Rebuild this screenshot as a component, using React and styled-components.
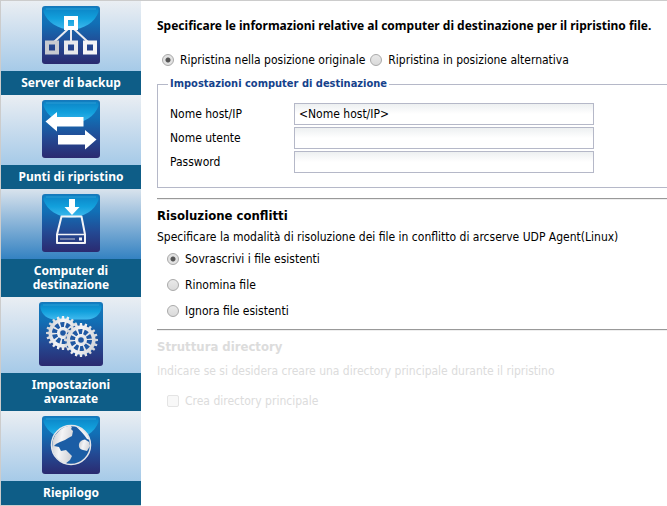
import React, { useState } from 'react';
import styled, { createGlobalStyle } from 'styled-components';

const colors = {
  band: '#0e5d87',
  line: '#b5b8c8',
  legend: '#15428b',
  muted: '#dcdcdc',
};

const gearPath = (cx, cy, outer, inner, teeth)=>{
  const step = (Math.PI * 2) / teeth;
  const at = (r, a)=> `${(cx + r * Math.cos(a)).toFixed(2)} ${(cy + r * Math.sin(a)).toFixed(2)}`;
  let d = '';
  for (let i = 0; i < teeth; i++) {
    const a = i * step;
    d += `${i ? 'L' : 'M'}${at(inner, a - step * 0.3)}L${at(outer, a - step * 0.2)}L${at(outer, a + step * 0.2)}L${at(inner, a + step * 0.3)}`;
  }
  return d + 'Z';
}

const Gear = ({cx, cy})=>(
  <g>
    <path d={gearPath(cx, cy, 17, 14.5, 20)} fill="url(#metal)" />
    <circle cx={cx} cy={cy} r="8.500" fill="none" stroke="#2058a3" strokeWidth="5" strokeDasharray="3.7 1.641" />
    <circle cx={cx} cy={cy} r="3.600" fill="#2058a3" stroke="#e4e6ea" strokeWidth="1.600" />
  </g>
)

const gloss = {
  58: 'M4 1.5H54Q57 2 56.5 6C53 16 42 23.5 29 23.5C16 23.5 5 16 1.5 6Q1 2 4 1.5Z',
  64: 'M4 1.5H60Q63 2 62.5 6C61 13 56 17 48 17.5H16C8 17 3 13 1.5 6Q1 2 4 1.5Z',
};

const Tile = ({size, children})=>(
  <svg width={size} height={size} viewBox={`0 0 ${size} ${size}`} aria-hidden="true">
    <defs>
      <linearGradient id="tile" x1="0" y1="0" x2="0" y2="1">
        <stop offset="0" stopColor="#1779bb" />
        <stop offset="0.3" stopColor="#116fb5" />
        <stop offset="0.65" stopColor="#234a94" />
        <stop offset="1" stopColor="#2b2a70" />
      </linearGradient>
      <linearGradient id="gloss" x1="0" y1="0" x2="0" y2="1">
        <stop offset="0" stopColor="#0b84c6" />
        <stop offset="0.5" stopColor="#12a0dc" />
        <stop offset="1" stopColor="#3fb9ee" />
      </linearGradient>
      <linearGradient id="metal" x1="0" y1="0" x2="1" y2="0.3">
        <stop offset="0" stopColor="#c3c5ca" />
        <stop offset="0.5" stopColor="#f4f4f6" />
        <stop offset="1" stopColor="#d5d6da" />
      </linearGradient>
    </defs>
    <rect width={size} height={size} rx="3" fill="url(#tile)" />
    <path d={gloss[size]} fill="url(#gloss)" />
    <path d={`M4 3H${size - 4}`} stroke="#3ba5da" strokeWidth="1" opacity="0.7" />
    {children}
  </svg>
)

const ServerIcon = ()=>(
  <Tile size={58}>
    <path d="M29 24V35M26 23L12 36M32 23L46 36" stroke="#e9ebf0" strokeWidth="2" fill="none" />
    <path fillRule="evenodd" d="M22 10h14v14H22zM26 14v6h6v-6z" fill="#fff" />
    <path fillRule="evenodd" d="M3 34.500h14v14H3zM7 38.500v6h6v-6z" fill="#c8cad0" />
    <path fillRule="evenodd" d="M22 34.500h14v14H22zM26 38.500v6h6v-6z" fill="#e8e9ec" />
    <path fillRule="evenodd" d="M41 34.500h14v14H41zM45 38.500v6h6v-6z" fill="#f4f4f6" />
  </Tile>
)

const PointsIcon = ()=>(
  <Tile size={58}>
    <path d="M3.500 21.500L15 12V17H41.500V26.500H15V31.500Z" fill="#fff" />
    <path d="M54.500 39.500L43 30V35H16V44.500H43V49.500Z" fill="#fff" />
  </Tile>
)

const ComputerIcon = ()=>(
  <Tile size={58}>
    <path d="M27 5H33V13H37.500L30 21L22.500 13H27Z" fill="#fff" />
    <path d="M19.500 22.500H39.500L43 40.500V49H15V40.500Z" fill="none" stroke="#f2f3f6" strokeWidth="2" strokeLinejoin="round" />
    <path d="M15 40.500H43" stroke="#f2f3f6" strokeWidth="1.500" />
    <path d="M18 45H33" stroke="#c4c8d4" strokeWidth="1" />
    <rect x="37" y="43.500" width="3" height="3" fill="#f2f3f6" />
  </Tile>
)

const SettingsIcon = ()=>(
  <Tile size={64}>
    <Gear cx={24} cy={31} />
    <circle cx="42" cy="38" r="15.500" fill="#2058a3" />
    <Gear cx={42} cy={38} />
  </Tile>
)

const GlobeIcon = ()=>(
  <Tile size={58}>
    <circle cx="29" cy="29" r="19" fill="#1b5da5" />
    <path d="M11 24Q15 12 28 9.500Q31 11 29 13L31 15L30 20Q26 22 23 24L18 26L14 28L12 30L17 31L19 35L24 34L30 40L28 44L23 48Q13 43 10 33Z" fill="url(#metal)" />
    <path d="M34 10.500Q44 13 48 24L45 23Q42 18 34 10.500Z" fill="#f0f1f3" />
    <path d="M37 28Q38 24 43 23.500L47 26L48 30L45 35L41 34Q36 33 37 28Z" fill="url(#metal)" />
    <circle cx="29" cy="29" r="19.500" fill="none" stroke="#e4e6ea" strokeWidth="1.500" />
  </Tile>
)

const steps = [
  { label: 'Server di backup', Icon: ServerIcon },
  { label: 'Punti di ripristino', Icon: PointsIcon },
  { label: 'Computer di destinazione', Icon: ComputerIcon, active: true },
  { label: 'Impostazioni avanzate', Icon: SettingsIcon },
  { label: 'Riepilogo', Icon: GlobeIcon },
];

const conflicts = ['Sovrascrivi i file esistenti', 'Rinomina file', 'Ignora file esistenti'];

const App = ()=>{
  const [position, setPosition] = useState('original');
  const [conflict, setConflict] = useState(0);

  return (
    <Page>
      <GlobalStyle />
      <Sidebar>
        {steps.map(({label, Icon, active})=>(
          <Step key={label} type="button" aria-current={active ? 'step' : undefined}>
            <StepIcon $active={active}><Icon /></StepIcon>
            <StepLabel>{label}</StepLabel>
          </Step>
        ))}
      </Sidebar>
      <Main>
        <Intro>Specificare le informazioni relative al computer di destinazione per il ripristino file.</Intro>
        <Positions>
          <Choice>
            <Radio name="position" checked={position === 'original'} onChange={()=> setPosition('original')} />
            Ripristina nella posizione originale
          </Choice>
          <Choice>
            <Radio name="position" checked={position === 'other'} onChange={()=> setPosition('other')} />
            Ripristina in posizione alternativa
          </Choice>
        </Positions>
        <Target>
          <Legend>Impostazioni computer di destinazione</Legend>
          <Fields>
            <FieldLabel htmlFor="host">Nome host/IP</FieldLabel>
            <Field id="host" defaultValue="<Nome host/IP>" />
            <FieldLabel htmlFor="user">Nome utente</FieldLabel>
            <Field id="user" />
            <FieldLabel htmlFor="password">Password</FieldLabel>
            <Field id="password" type="password" />
          </Fields>
        </Target>
        <Rule />
        <Section>
          <Title>Risoluzione conflitti</Title>
          <Text>Specificare la modalità di risoluzione dei file in conflitto di arcserve UDP Agent(Linux)</Text>
          <Options>
            {conflicts.map((label, id)=>(
              <Choice key={label}>
                <Radio name="conflict" checked={conflict === id} onChange={()=> setConflict(id)} />
                {label}
              </Choice>
            ))}
          </Options>
        </Section>
        <Rule />
        <Section $disabled>
          <Title>Struttura directory</Title>
          <Text>Indicare se si desidera creare una directory principale durante il ripristino</Text>
          <Options>
            <Choice>
              <Check disabled />
              Crea directory principale
            </Choice>
          </Options>
        </Section>
      </Main>
    </Page>
  );
}
export default App;

const GlobalStyle = createGlobalStyle`
* {
  box-sizing: border-box;
}
body {
  margin: 0;
  background: #fff;
}
body, input, button {
  font-family: 'DejaVu Sans Condensed', 'Noto Sans', sans-serif;
  font-size: 12px;
  color: #000;
}
`
const Page = styled.div`
display: flex;
align-items: flex-start;
min-height: 100vh;
border-top: 1px solid #ccc;
`
const Sidebar = styled.nav`
display: flex;
flex-direction: column;
flex: 0 0 141px;
border-left: 1px solid #ccc;
border-bottom: 1px solid #ccc;
`
const Step = styled.button`
display: flex;
flex-direction: column;
padding: 0;
border: 0;
background: none;
cursor: pointer;
`
const StepIcon = styled.span`
display: flex;
justify-content: center;
width: 100%;
padding: 5px 0 7px;
background: ${({$active})=> $active
  ? 'linear-gradient(#d9e3ed, #3482c2)'
  : 'linear-gradient(#eaeef3, #a6cae8)'};
`
const StepLabel = styled.span`
width: 100%;
padding: 5px 10px;
background: ${colors.band};
color: #fff;
font-family: 'Noto Sans', sans-serif;
font-size: 12px;
font-weight: bold;
line-height: 14px;
text-align: center;
`
const Main = styled.main`
flex: 1;
min-width: 0;
padding: 17px 0 0 16px;
`
const Title = styled.h2`
margin: 0;
font-size: 13px;
line-height: 16px;
`
const Intro = styled.h1`
margin: 0;
font-family: 'Noto Sans', sans-serif;
font-size: 12px;
line-height: 16px;
white-space: nowrap;
`
const Positions = styled.div`
display: flex;
gap: 5px;
padding: 16px 0 6px 5px;
`
const Choice = styled.label`
display: flex;
align-items: center;
gap: 6px;
line-height: 20px;
white-space: nowrap;
`
const Radio = styled.input.attrs({ type: 'radio' })`
appearance: none;
width: 12px;
height: 12px;
margin: 0;
border: 1px solid #a9a9a9;
border-radius: 50%;
background: linear-gradient(#e9e9e9, #dadada);
&:checked {
  background: radial-gradient(circle, #555 0 2px, #e2e2e2 3px);
}
`
const Check = styled.input.attrs({ type: 'checkbox' })`
appearance: none;
width: 12px;
height: 12px;
margin: 0;
border: 1px solid #e4e4e4;
border-radius: 2px;
background: #f8f8f8;
`
const Target = styled.fieldset`
min-width: 0;
margin: 0;
padding: 11px 0 14px 12px;
border: 1px solid ${colors.line};
border-right: 0;
`
const Legend = styled.legend`
margin-left: -2px;
padding: 0 2px;
color: ${colors.legend};
font-size: 11px;
font-weight: bold;
line-height: 16px;
`
const Fields = styled.div`
display: grid;
grid-template-columns: 124px minmax(0, 300px);
row-gap: 2px;
`
const FieldLabel = styled.label`
line-height: 22px;
`
const Field = styled.input`
width: 100%;
height: 22px;
padding: 0 4px;
border: 1px solid ${colors.line};
background: linear-gradient(#edf0f1, #fff 10px);
outline: none;
`
const Rule = styled.hr`
height: 2px;
margin: 10px 0 8px;
border: 0;
border-top: 1px solid #999;
border-bottom: 1px solid #eee;
`
const Options = styled.div`
display: flex;
flex-direction: column;
padding: 4px 0 0 10px;
gap: 6px;
`
const Text = styled.p`
margin: 5px 0 0;
line-height: 16px;
`
const Section = styled.section`
color: ${({$disabled})=> $disabled ? colors.muted : 'inherit'};
${Text} {
  margin-top: ${({$disabled})=> $disabled ? '8px' : '5px'};
}
${Options} {
  padding-top: ${({$disabled})=> $disabled ? '12px' : '4px'};
}
& + ${Rule} {
  margin-top: 8px;
}
`
